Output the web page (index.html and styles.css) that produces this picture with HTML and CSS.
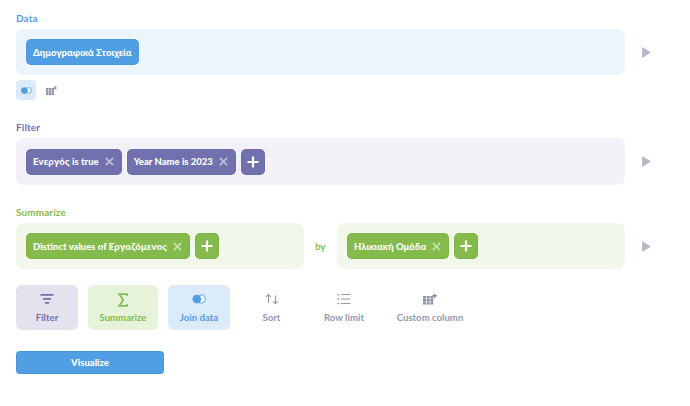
FILE: index.html
```html
<!DOCTYPE html>
<html lang="en">
<head>
<meta charset="utf-8">
<title>Notebook</title>
<link rel="stylesheet" href="styles.css">
</head>
<body>
<main class="page">
  <section class="step step-data">
    <h2 class="label">Data</h2>
    <div class="row">
      <div class="panel"><span class="pill">Δημογραφικά Στοιχεία</span></div>
      <svg class="run" viewBox="0 0 10 10"><path d="M1 0 9 5 1 10Z"/></svg>
    </div>
    <div class="mini-actions">
      <span class="mini mini-on"><svg viewBox="0 0 16 10" class="ic-join-s"><circle cx="11" cy="5" r="4.2" fill="#fff" stroke="#509ee3" stroke-width="1.2"/><circle cx="5" cy="5" r="4.8" fill="#509ee3"/></svg></span>
      <span class="mini"><svg viewBox="0 0 16 13" class="ic-grid-s"><use href="#grid"/></svg></span>
    </div>
  </section>

  <section class="step step-filter">
    <h2 class="label">Filter</h2>
    <div class="row">
      <div class="panel">
        <span class="pill"><span class="gr">Ενεργός</span>&nbsp;is true<svg class="x" viewBox="0 0 10 10"><path d="M1 1 9 9M9 1 1 9"/></svg></span>
        <span class="pill">Year Name is 2023<svg class="x" viewBox="0 0 10 10"><path d="M1 1 9 9M9 1 1 9"/></svg></span>
        <span class="pill plus"><svg viewBox="0 0 12 12"><path d="M6 0.5V11.5M0.5 6H11.5"/></svg></span>
      </div>
      <svg class="run" viewBox="0 0 10 10"><path d="M1 0 9 5 1 10Z"/></svg>
    </div>
  </section>

  <section class="step step-sum">
    <h2 class="label">Summarize</h2>
    <div class="row">
      <div class="sum-grid">
        <div class="panel">
          <span class="pill">Distinct values of&nbsp;<span class="gr">Εργαζόμενος</span><svg class="x" viewBox="0 0 10 10"><path d="M1 1 9 9M9 1 1 9"/></svg></span>
          <span class="pill plus"><svg viewBox="0 0 12 12"><path d="M6 0.5V11.5M0.5 6H11.5"/></svg></span>
        </div>
        <span class="by">by</span>
        <div class="panel">
          <span class="pill">Ηλικιακή Ομάδα<svg class="x" viewBox="0 0 10 10"><path d="M1 1 9 9M9 1 1 9"/></svg></span>
          <span class="pill plus"><svg viewBox="0 0 12 12"><path d="M6 0.5V11.5M0.5 6H11.5"/></svg></span>
        </div>
      </div>
      <svg class="run" viewBox="0 0 10 10"><path d="M1 0 9 5 1 10Z"/></svg>
    </div>
  </section>

  <nav class="actions">
    <span class="act act-filter"><svg viewBox="0 0 14 12" class="ic"><path d="M0.5 1H13.5V2.8H0.5ZM3 5H11V6.8H3ZM5 9H9V10.8H5Z" fill="#7172ad"/></svg>Filter</span>
    <span class="act act-sum"><svg viewBox="0 0 12 16" class="ic ic-sigma"><path d="M10.5 3.5V1.2H1.5L6.3 8 1.5 14.8H10.5V12.5" fill="none" stroke="#84bb4c" stroke-width="1.9"/></svg>Summarize</span>
    <span class="act act-join"><svg viewBox="0 0 16 12" class="ic"><circle cx="10.5" cy="6" r="4.6" fill="#fff" stroke="#509ee3" stroke-width="1.1"/><circle cx="5.5" cy="6" r="5" fill="#509ee3"/></svg>Join data</span>
    <span class="act act-plain"><svg viewBox="0 0 14 12" class="ic"><path d="M3.5 10V2M1 4.2 3.5 1.5 6 4.2M10.5 2.5V10.5M8 8 10.5 10.7 13 8" fill="none" stroke="#949aab" stroke-width="1.1"/></svg>Sort</span>
    <span class="act act-plain"><svg viewBox="0 0 14 12" class="ic"><path d="M4 1.5H13.5M4 6H13.5M4 10.5H13.5" stroke="#949aab" stroke-width="1.2"/><path d="M0.5 1H2.3V2.5H0.5ZM0.5 5.2H2.3V6.8H0.5ZM0.5 9.7H2.3V11.2H0.5Z" fill="#949aab"/></svg>Row limit</span>
    <span class="act act-plain"><svg viewBox="0 0 16 13" class="ic"><use href="#grid"/></svg>Custom column</span>
  </nav>

  <button class="visualize" type="button">Visualize</button>
</main>

<svg class="defs" aria-hidden="true">
  <symbol id="grid" viewBox="0 0 16 13">
    <path d="M0 3H3.4V6H0ZM4.2 3H7.6V6H4.2ZM8.4 3H11.8V6H8.4ZM0 6.6H3.4V9.6H0ZM4.2 6.6H7.6V9.6H4.2ZM8.4 6.6H11.8V9.6H8.4ZM0 10.2H3.4V13H0ZM4.2 10.2H7.6V13H4.2ZM8.4 10.2H11.8V13H8.4ZM12.5 0H14V2H16V3.5H14V5.5H12.5V3.5H10.5V2H12.5Z" fill="#8c92a3"/>
  </symbol>
</svg>
</body>
</html>
```

FILE: styles.css
```css
* { box-sizing: border-box; }
html, body { margin: 0; padding: 0; background: #fff; }
body { font-family: Lato, "Noto Sans", sans-serif; width: 690px; height: 406px; overflow: hidden; }
.page { padding: 12px 0 0 16px; }
.defs { display: none; }

.label { margin: 0 0 5px; font-size: 10px; line-height: 12px; font-weight: 700; letter-spacing: 0.1px; }

.row { display: flex; align-items: center; }
.panel { display: flex; align-items: center; gap: 5px; height: 46px; padding: 0 10px; border-radius: 8px; }
.row > .panel { width: 609px; }
.run { width: 11px; height: 11px; margin-left: 16px; fill: #b5b9c6; }

.pill { display: inline-flex; align-items: center; height: 26px; padding: 0 6px; border-radius: 5px; color: #fff; font-size: 9.5px; font-weight: 900; border: 1px solid rgba(0,0,0,0.04); box-shadow: 0 0 0 1px rgba(255,255,255,.35); white-space: nowrap; }
.gr { letter-spacing: 0.25px; }
.x { width: 9px; height: 9px; margin-left: 6px; margin-right: 1px; fill: none; stroke: rgba(255,255,255,.55); stroke-width: 1.9; }
.plus { width: 24px; padding: 0; justify-content: center; }
.plus svg { width: 12px; height: 12px; fill: none; stroke: #fff; stroke-width: 2.2; }

.step-data .label { color: #509ee3; }
.step-data .panel { background: #edf5fc; }
.step-data .pill { background: #509ee3; }

.mini-actions { display: flex; margin-top: 5px; height: 20px; }
.mini { display: flex; align-items: center; justify-content: center; width: 20px; height: 20px; border-radius: 4px; margin-right: 5px; }
.mini-on { background: #dcebf9; }
.ic-join-s { width: 11px; height: 7px; display: block; }
.ic-grid-s { width: 11px; height: 9px; display: block; }

.step-filter { margin-top: 21px; }
.step-filter .label { color: #7172ad; }
.step-filter .panel { background: #f1f1f7; height: 47px; }
.step-filter .pill { background: #7172ad; }

.step-sum { margin-top: 21px; }
.step-sum .label { color: #84bb4c; }
.step-sum .panel { background: #f1f7ea; flex: none; width: 288px; }
.step-sum .pill { background: #84bb4c; }
.sum-grid { display: flex; align-items: center; width: 609px; }
.by { flex: 1; text-align: center; color: #84bb4c; font-size: 9.6px; font-weight: 700; }

.actions { display: flex; gap: 10px; margin-top: 16px; }
.act { display: flex; flex-direction: column; align-items: center; height: 45px; padding: 8px 0 0; border-radius: 6px; font-size: 9.6px; line-height: 12px; font-weight: 700; gap: 7px; width: 62px; }
.ic { width: 14px; height: 12px; display: block; }
.ic-sigma { height: 14px; margin-bottom: -2px; }
.act-filter { background: #e3e3ef; color: #7172ad; }
.act-sum { background: #e7f2da; color: #84bb4c; width: 70px; }
.act-join { background: #dcebf9; color: #509ee3; }
.act-plain { color: #949aab; }
.act-plain:nth-child(4) { width: 63px; }
.act-plain:nth-child(5) { width: 62px; }
.act-plain:nth-child(6) { width: 78px; margin-left: 6px; }

.visualize { display: block; margin-top: 21px; width: 148px; height: 23px; padding: 0; border: 1px solid rgba(0,0,0,.06); border-radius: 4px; background: #509ee3; color: #fff; font: 900 9.5px/1 Lato, sans-serif; }
```
